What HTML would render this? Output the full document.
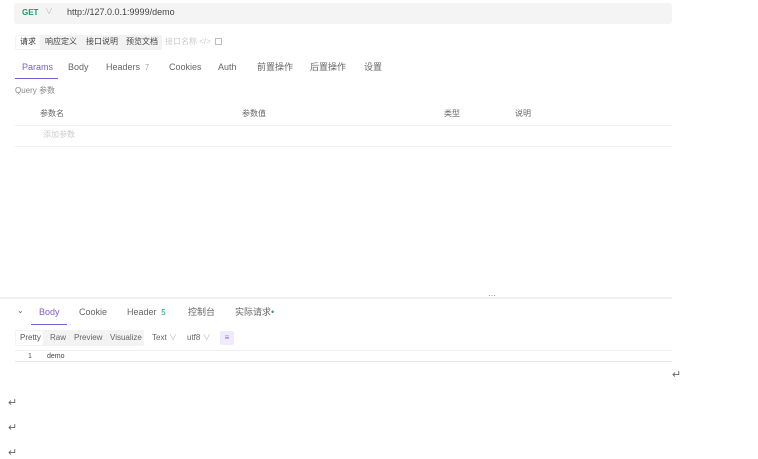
<!DOCTYPE html>
<html><head><meta charset="utf-8"><style>
*{margin:0;padding:0;box-sizing:border-box}
body{width:758px;height:459px;background:#fff;position:relative;overflow:hidden;font-family:"Liberation Sans","Noto Sans CJK SC",sans-serif;font-size:8px;color:#333}
.a{position:absolute;white-space:nowrap;line-height:1}
.g{color:#666}
.l{color:#bbb}
.ret{position:absolute;font-size:11px;color:#666;line-height:1}
</style></head><body>
<div class="a" style="left:14px;top:3px;width:658px;height:21px;background:#f4f4f4;border-radius:3px"></div>
<div class="a" style="left:22px;top:9px;font-weight:bold;color:#1a9a6a;font-size:8px">GET</div>
<div class="a l" style="left:45px;top:8px;font-size:8px">∨</div>
<div class="a" style="left:67px;top:8px;color:#444;font-size:9px">http://127.0.0.1:9999/demo</div>

<div class="a" style="left:15px;top:35px;width:147px;height:15px;background:#f2f2f2;border-radius:2px"></div>
<div class="a" style="left:16px;top:36px;width:24px;height:13px;background:#fff;border-radius:2px"></div>
<div class="a" style="left:20px;top:38px;color:#333">请求</div>
<div class="a" style="left:45px;top:38px;color:#444">响应定义</div>
<div class="a" style="left:86px;top:38px;color:#444">接口说明</div>
<div class="a" style="left:126px;top:38px;color:#444">预览文档</div>
<div class="a l" style="left:165px;top:38px;color:#ccc">接口名称 &lt;/&gt;</div>
<div class="a" style="left:215px;top:38px;width:7px;height:7px;border:1px solid #bbb"></div>

<div class="a" style="left:22px;top:63px;font-size:9px;color:#7c5cd6">Params</div>
<div class="a" style="left:15px;top:78px;width:43px;height:1px;background:#7c5cd6"></div>
<div class="a g" style="left:68px;top:63px;font-size:9px">Body</div>
<div class="a g" style="left:106px;top:63px;font-size:9px">Headers <span style="color:#aaa;font-size:8px">&nbsp;7</span></div>
<div class="a g" style="left:169px;top:63px;font-size:9px">Cookies</div>
<div class="a g" style="left:218px;top:63px;font-size:9px">Auth</div>
<div class="a g" style="left:257px;top:63px;font-size:9px">前置操作</div>
<div class="a g" style="left:310px;top:63px;font-size:9px">后置操作</div>
<div class="a g" style="left:364px;top:63px;font-size:9px">设置</div>

<div class="a" style="left:15px;top:87px;color:#888">Query 参数</div>
<div class="a g" style="left:40px;top:110px">参数名</div>
<div class="a g" style="left:242px;top:110px">参数值</div>
<div class="a g" style="left:444px;top:110px">类型</div>
<div class="a g" style="left:515px;top:110px">说明</div>
<div class="a" style="left:15px;top:125px;width:657px;height:1px;background:#f0f0f0"></div>
<div class="a" style="left:43px;top:131px;color:#ccc">添加参数</div>
<div class="a" style="left:15px;top:146px;width:657px;height:1px;background:#f0f0f0"></div>

<div class="a" style="left:0;top:297px;width:672px;height:2px;background:#f0f0f0"></div>
<div class="a" style="left:488px;top:292px;color:#666;font-size:8px">···</div>
<div class="a g" style="left:17px;top:307px;font-size:8px">⌄</div>
<div class="a" style="left:39px;top:308px;font-size:9px;color:#7c5cd6">Body</div>
<div class="a" style="left:31px;top:324px;width:36px;height:1px;background:#7c5cd6"></div>
<div class="a g" style="left:79px;top:308px;font-size:9px">Cookie</div>
<div class="a g" style="left:127px;top:308px;font-size:9px">Header <span style="color:#1a9a6a;font-size:8px">&nbsp;5</span></div>
<div class="a g" style="left:188px;top:308px;font-size:9px">控制台</div>
<div class="a g" style="left:235px;top:308px;font-size:9px">实际请求<span style="color:#1a9a6a">•</span></div>

<div class="a" style="left:15px;top:330px;width:129px;height:16px;background:#f3f3f3;border-radius:2px"></div>
<div class="a" style="left:16px;top:331px;width:27px;height:14px;background:#fff;border-radius:2px"></div>
<div class="a" style="left:20px;top:334px;color:#555">Pretty</div>
<div class="a g" style="left:50px;top:334px">Raw</div>
<div class="a g" style="left:74px;top:334px">Preview</div>
<div class="a g" style="left:110px;top:334px">Visualize</div>
<div class="a g" style="left:152px;top:334px">Text <span class="l">∨</span></div>
<div class="a g" style="left:187px;top:334px">utf8 <span class="l">∨</span></div>
<div class="a" style="left:220px;top:331px;width:14px;height:14px;background:#efebfb;border-radius:2px;color:#8a6ee0;font-size:8px;text-align:center;line-height:14px">≡</div>
<div class="a" style="left:15px;top:350px;width:657px;height:1px;background:#f0f0f0"></div>
<div class="a" style="left:28px;top:353px;color:#555;font-size:7px">1</div>
<div class="a" style="left:47px;top:353px;color:#444;font-size:7px">demo</div>
<div class="a" style="left:15px;top:361px;width:657px;height:1px;background:#e8e8e8"></div>

<div class="ret" style="left:672px;top:370px">↵</div>
<div class="ret" style="left:8px;top:398px">↵</div>
<div class="ret" style="left:8px;top:423px">↵</div>
<div class="ret" style="left:8px;top:448px">↵</div>
</body></html>
